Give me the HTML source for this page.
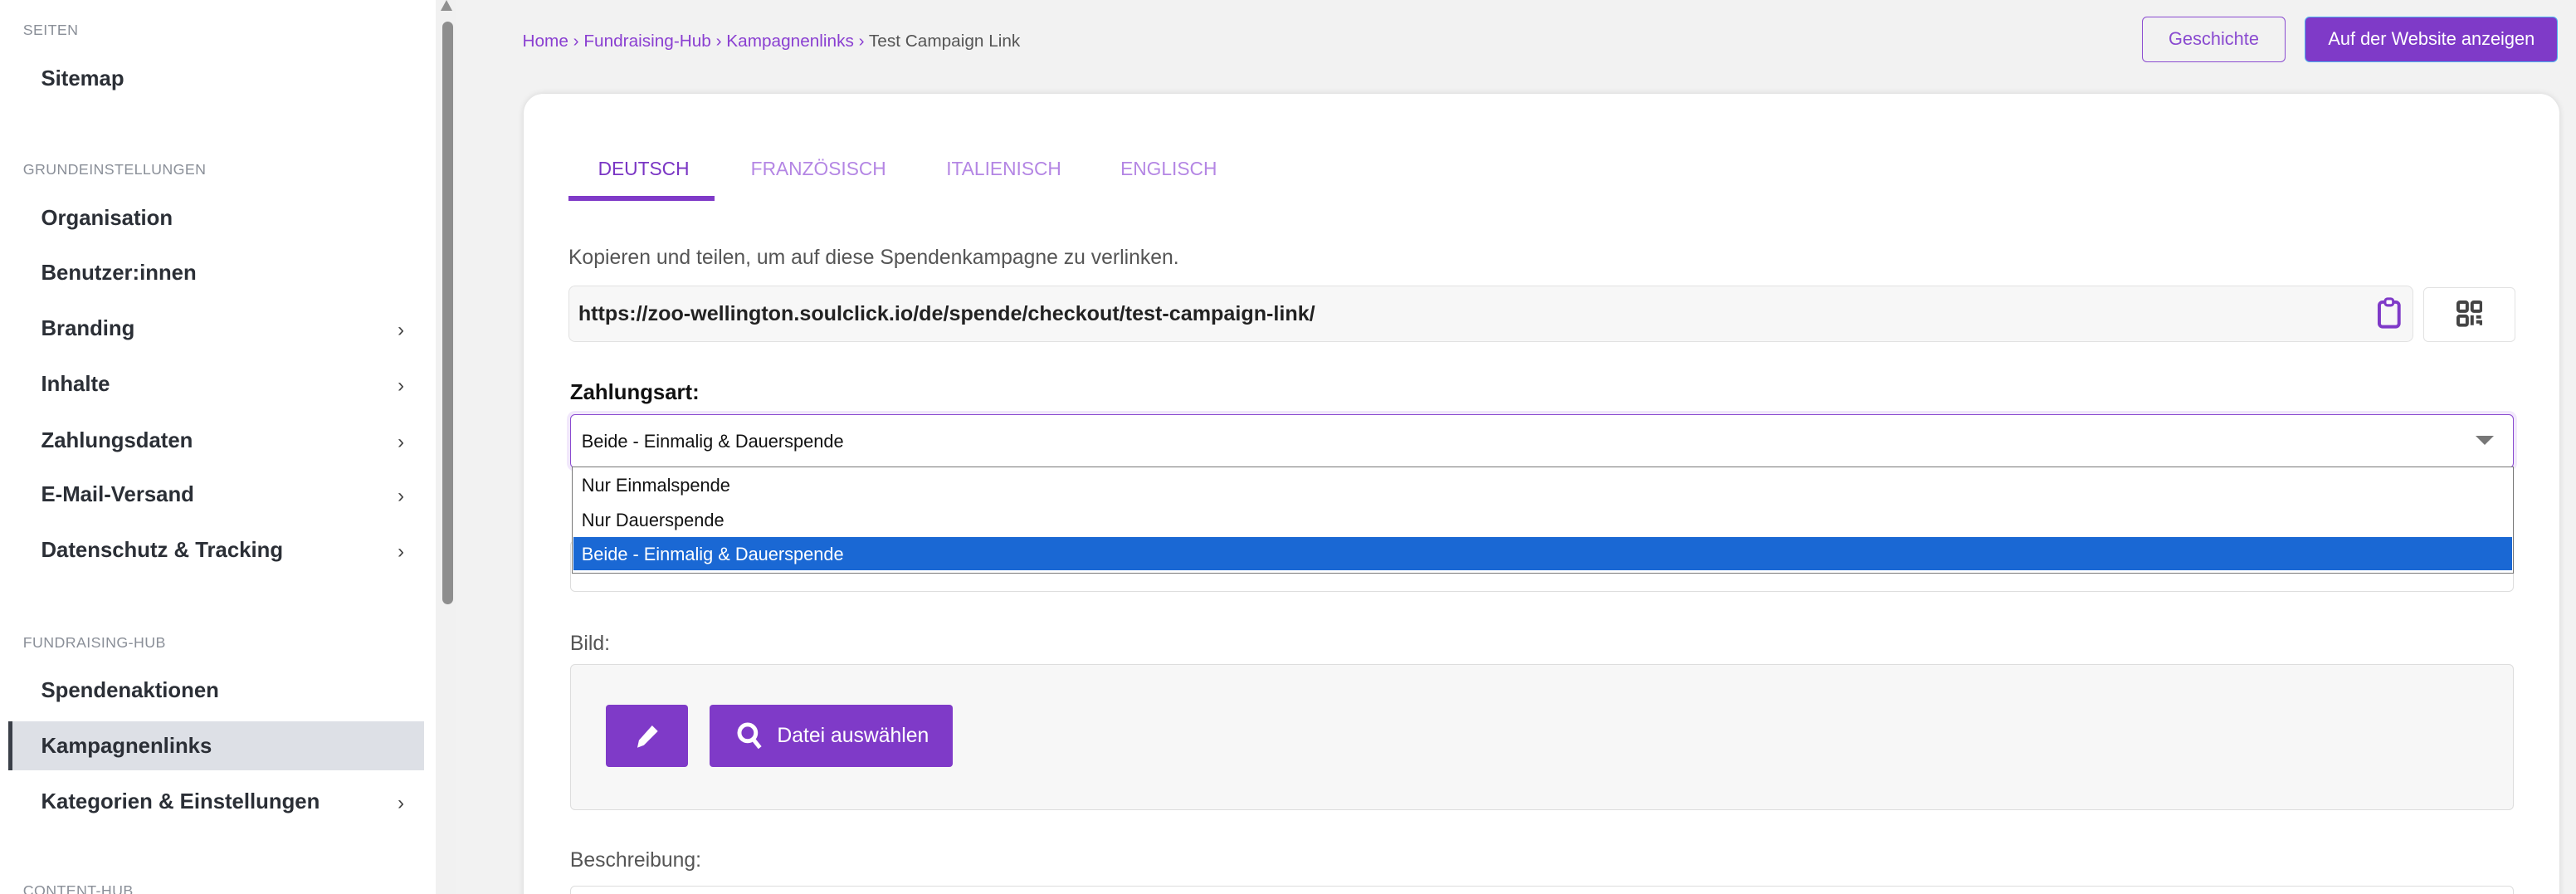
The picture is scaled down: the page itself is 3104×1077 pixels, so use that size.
<!DOCTYPE html>
<html><head><meta charset="utf-8"><style>
html,body{margin:0;padding:0;overflow:hidden;background:#f2f2f2}
#r{zoom:1.9796;width:1568px;height:544px;position:relative;font-family:"Liberation Sans",sans-serif;overflow:hidden;background:#f2f2f2}
.a{position:absolute;white-space:nowrap}
.sb{left:0;top:0;width:265px;height:544px;background:#fff}
.h{font-size:9px;color:#8a8f98;left:14px;letter-spacing:.2px}
.it{font-size:13px;font-weight:bold;color:#2b2f36;left:25px}
.ch{left:242px;font-size:12px;color:#444}
.tab{font-size:11.5px;color:#b486e4;top:96px}
</style></head><body><div id="r">
<div class="a sb"></div>
<div class="a" style="left:265px;top:0;width:13px;height:544px;background:#f1f1f1"></div>
<div class="a" style="left:268px;top:0;width:0;height:0;border-left:4px solid transparent;border-right:4px solid transparent;border-bottom:7px solid #909090"></div>
<div class="a" style="left:269px;top:13px;width:7px;height:355px;background:#8e8e8e;border-radius:4px"></div>

<div class="a h" style="top:13px">SEITEN</div>
<div class="a it" style="top:41px">Sitemap</div>
<div class="a h" style="top:98px">GRUNDEINSTELLUNGEN</div>
<div class="a it" style="top:126px">Organisation</div>
<div class="a it" style="top:159px">Benutzer:innen</div>
<div class="a it" style="top:193px">Branding</div><div class="a ch" style="top:194px">›</div>
<div class="a it" style="top:227px">Inhalte</div><div class="a ch" style="top:228px">›</div>
<div class="a it" style="top:261px">Zahlungsdaten</div><div class="a ch" style="top:262px">›</div>
<div class="a it" style="top:294px">E-Mail-Versand</div><div class="a ch" style="top:295px">›</div>
<div class="a it" style="top:328px">Datenschutz &amp; Tracking</div><div class="a ch" style="top:329px">›</div>
<div class="a h" style="top:386px">FUNDRAISING-HUB</div>
<div class="a it" style="top:413px">Spendenaktionen</div>
<div class="a" style="left:5px;top:439px;width:253px;height:30px;background:#dde0e6;border-left:3px solid #3a3f48;box-sizing:border-box"></div>
<div class="a it" style="top:447px">Kampagnenlinks</div>
<div class="a it" style="top:481px">Kategorien &amp; Einstellungen</div><div class="a ch" style="top:482px">›</div>
<div class="a h" style="top:537px">CONTENT-HUB</div>

<div class="a" style="left:318px;top:19px;font-size:10.5px;color:#8a3fd1">Home › Fundraising-Hub › Kampagnenlinks › <span style="color:#555">Test Campaign Link</span></div>
<div class="a" style="left:1304px;top:10px;width:87px;height:28px;box-sizing:border-box;border:1px solid #8a4bd0;border-radius:3px;color:#8a4bd0;font-size:11px;text-align:center;line-height:26px">Geschichte</div>
<div class="a" style="left:1403px;top:10px;width:154px;height:28px;box-sizing:border-box;background:#7f3ac8;border:1px solid #4fb3f0;border-radius:3px;color:#fff;font-size:11px;text-align:center;line-height:26px">Auf der Website anzeigen</div>

<div class="a" style="left:319px;top:57px;width:1239px;height:500px;background:#fff;border-radius:12px;box-shadow:0 0 4px rgba(0,0,0,.12)"></div>
<div class="a tab" style="left:364px;color:#7a35c4">DEUTSCH</div>
<div class="a" style="left:346px;top:119px;width:89px;height:3px;background:#7f3ac8"></div>
<div class="a tab" style="left:457px">FRANZÖSISCH</div>
<div class="a tab" style="left:576px">ITALIENISCH</div>
<div class="a tab" style="left:682px">ENGLISCH</div>

<div class="a" style="left:346px;top:150px;font-size:12.5px;color:#555">Kopieren und teilen, um auf diese Spendenkampagne zu verlinken.</div>
<div class="a" style="left:346px;top:174px;width:1123px;height:34px;box-sizing:border-box;background:#f7f7f7;border:1px solid #e2e2e2;border-radius:4px"></div>
<div class="a" style="left:352px;top:184px;font-size:12.7px;font-weight:bold;color:#222">https://zoo-wellington.soulclick.io/de/spende/checkout/test-campaign-link/</div>
<svg class="a" style="left:1446px;top:181px" width="16" height="20" viewBox="0 0 16 20"><rect x="2" y="3" width="12" height="15" rx="2" fill="none" stroke="#7f3ac8" stroke-width="2"/><rect x="5.5" y="1" width="5" height="4" rx="1.5" fill="#fff" stroke="#7f3ac8" stroke-width="1.6"/></svg>
<div class="a" style="left:1475px;top:175px;width:56px;height:33px;box-sizing:border-box;border:1px solid #e2e2e2;border-radius:3px;background:#fff"></div>
<svg class="a" style="left:1495px;top:183px" width="16" height="16" viewBox="0 0 16 16" fill="none" stroke="#444" stroke-width="2"><rect x="1" y="1" width="5.5" height="5.5" rx="1"/><rect x="9.5" y="1" width="5.5" height="5.5" rx="1"/><rect x="1" y="9.5" width="5.5" height="5.5" rx="1"/><path d="M9.5 9v6M12 10h3M12 13h3v2"/></svg>

<div class="a" style="left:347px;top:232px;font-size:13px;font-weight:bold;color:#111">Zahlungsart:</div>
<div class="a" style="left:347px;top:329px;width:1183px;height:31px;box-sizing:border-box;border:1px solid #ddd;border-radius:3px"></div>
<div class="a" style="left:347px;top:252px;width:1183px;height:33px;box-sizing:border-box;border:1px solid #8a4bd0;border-radius:3px;box-shadow:0 0 0 2px #f1e8fb;background:#fff"></div>
<div class="a" style="left:354px;top:262px;font-size:11px;color:#111">Beide - Einmalig &amp; Dauerspende</div>
<div class="a" style="left:1507px;top:265px;width:0;height:0;border-left:6px solid transparent;border-right:6px solid transparent;border-top:6px solid #777"></div>
<div class="a" style="left:348px;top:284px;width:1182px;height:65px;box-sizing:border-box;border:1px solid #777;background:#fff"></div>
<div class="a" style="left:354px;top:289px;font-size:11px;color:#111">Nur Einmalspende</div>
<div class="a" style="left:354px;top:310px;font-size:11px;color:#111">Nur Dauerspende</div>
<div class="a" style="left:349px;top:327px;width:1180px;height:20px;background:#1a68d4"></div>
<div class="a" style="left:354px;top:331px;font-size:11px;color:#fff">Beide - Einmalig &amp; Dauerspende</div>

<div class="a" style="left:347px;top:385px;font-size:12.5px;color:#555">Bild:</div>
<div class="a" style="left:347px;top:404px;width:1183px;height:89px;box-sizing:border-box;background:#f7f7f7;border:1px solid #ddd;border-radius:3px"></div>
<div class="a" style="left:369px;top:429px;width:50px;height:38px;background:#7f3ac8;border-radius:2px"></div>
<svg class="a" style="left:386px;top:440px" width="16" height="16" viewBox="0 0 16 16"><path d="M11 1.5l3.5 3.5L6 13.5 2 15l1-4.5z" fill="#fff"/></svg>
<div class="a" style="left:432px;top:429px;width:148px;height:38px;background:#7f3ac8;border-radius:2px"></div>
<svg class="a" style="left:448px;top:439px" width="17" height="18" viewBox="0 0 17 18" fill="none" stroke="#fff" stroke-width="2.5"><circle cx="7" cy="7" r="5"/><path d="M10.5 11l4 5"/></svg>
<div class="a" style="left:473px;top:441px;font-size:12.5px;color:#fff">Datei auswählen</div>

<div class="a" style="left:347px;top:517px;font-size:12.5px;color:#555">Beschreibung:</div>
<div class="a" style="left:347px;top:539px;width:1183px;height:20px;box-sizing:border-box;border:1px solid #ddd;border-radius:3px"></div>
</div></body></html>
